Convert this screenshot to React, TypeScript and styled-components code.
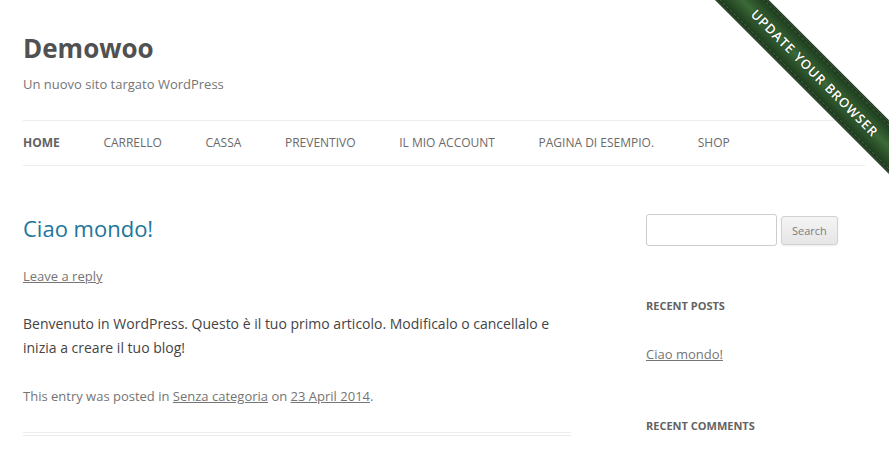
import React from "react";
import styled, { createGlobalStyle } from "styled-components";

const GlobalStyle = createGlobalStyle`
  html, body { margin: 0; padding: 0; background: #fff; }
  body {
    font-family: "Open Sans", "Liberation Sans", sans-serif;
    color: #444;
    font-size: 14px;
  }
  * { box-sizing: border-box; }
`;

const Page = styled.div`
  position: relative;
  overflow: hidden;
  height: 458px;
  padding: 0 24px 0 23px;
`;

const Header = styled.header`
  padding: 24px 0;
`;

const SiteTitle = styled.h1`
  margin: 0;
  font-size: 26px;
  line-height: 48px;
  font-weight: 700;
  color: #515151;
`;

const Tagline = styled.h2`
  margin: 0;
  font-size: 13px;
  line-height: 24px;
  font-weight: 400;
  color: #757575;
`;

const Nav = styled.nav`
  margin-top: 24px;
`;

const NavList = styled.ul`
  list-style: none;
  margin: 0;
  padding: 0;
  display: flex;
  gap: 43.6px;
  border-top: 1px solid #ededed;
  border-bottom: 1px solid #ededed;
`;

const NavItem = styled.li<{ $current?: boolean }>`
  font-size: 12px;
  line-height: 44.3px;
  text-transform: uppercase;
  white-space: nowrap;
  color: ${(p) => (p.$current ? "#636363" : "#6a6a6a")};
  font-weight: ${(p) => (p.$current ? 700 : 400)};
`;

const Main = styled.div`
  display: flex;
  justify-content: space-between;
  align-items: flex-start;
`;

const Content = styled.main`
  width: 548px;
  margin-top: 26px;
`;

const Article = styled.article`
  padding-bottom: 24px;
  border-bottom: 4px double #ededed;
`;

const EntryTitle = styled.h1`
  margin: 0;
  font-size: 22px;
  line-height: 24px;
  font-weight: 400;
  color: #21759b;
`;

const MetaLine = styled.div<{ $top?: number }>`
  margin-top: ${(p) => p.$top ?? 0}px;
  font-size: 13px;
  line-height: 24px;
  color: #757575;
`;

const GreyLink = styled.a`
  color: #757575;
  text-decoration: underline;
`;

const Paragraph = styled.p`
  margin: 24px 0;
  font-size: 14px;
  line-height: 24px;
  color: #444;
`;

const Sidebar = styled.aside`
  width: 219px;
  margin-top: 24px;
`;

const SearchForm = styled.form`
  display: flex;
  align-items: center;
  gap: 4px;
  margin-bottom: 48px;
`;

const SearchInput = styled.input`
  width: 131px;
  height: 32px;
  padding: 6px;
  border: 1px solid #ccc;
  border-radius: 3px;
  font-family: inherit;
  font-size: 13px;
`;

const SearchButton = styled.button`
  height: 29px;
  padding: 0 10px;
  font-family: inherit;
  font-size: 11px;
  color: #7c7c7c;
  background: linear-gradient(to bottom, #f4f4f4, #e6e6e6);
  border: 1px solid #d2d2d2;
  border-radius: 3px;
  box-shadow: 0 1px 2px rgba(64, 64, 64, 0.1);
`;

const Widget = styled.section`
  margin-bottom: 48px;
`;

const WidgetTitle = styled.h3`
  margin: 0 0 24px;
  font-size: 11px;
  line-height: 24px;
  font-weight: 700;
  text-transform: uppercase;
  color: #636363;
`;

const WidgetList = styled.ul`
  list-style: none;
  margin: 0;
  padding: 0;
  font-size: 13px;
  line-height: 24px;
`;

const Ribbon = styled.div`
  position: absolute;
  left: 655px;
  top: 53.5px;
  width: 320px;
  height: 37.5px;
  transform: rotate(45deg);
  background: linear-gradient(
    to bottom,
    #1a361a 0%,
    #2a4f29 25%,
    #3b6a38 50%,
    #2a4f29 75%,
    #1a361a 100%
  );
  border-top: 1px solid #142b14;
  border-bottom: 1px solid #142b14;
  display: flex;
  align-items: center;
  justify-content: center;
  color: #fff;
  font-size: 13px;
  font-weight: 600;
  letter-spacing: 0.95px;
  text-transform: uppercase;
  text-shadow: 0 0 2px rgba(0, 0, 0, 0.6);
  white-space: nowrap;

  &::before {
    content: "";
    position: absolute;
    left: 0;
    right: 0;
    top: 2px;
    bottom: 2px;
    border-top: 1px dashed rgba(255, 255, 255, 0.15);
    border-bottom: 1px dashed rgba(255, 255, 255, 0.15);
  }
`;

const navItems = [
  "Home",
  "Carrello",
  "Cassa",
  "Preventivo",
  "Il mio account",
  "Pagina di esempio.",
  "Shop",
];

export default function App() {
  return (
    <>
      <GlobalStyle />
      <Page>
        <Header>
          <SiteTitle>Demowoo</SiteTitle>
          <Tagline>Un nuovo sito targato WordPress</Tagline>
          <Nav>
            <NavList>
              {navItems.map((item, i) => (
                <NavItem key={item} $current={i === 0}>
                  {item}
                </NavItem>
              ))}
            </NavList>
          </Nav>
        </Header>
        <Main>
          <Content>
            <Article>
              <EntryTitle>Ciao mondo!</EntryTitle>
              <MetaLine $top={24}>
                <GreyLink>Leave a reply</GreyLink>
              </MetaLine>
              <Paragraph>
                Benvenuto in WordPress. Questo è il tuo primo articolo.
                Modificalo o cancellalo e inizia a creare il tuo blog!
              </Paragraph>
              <MetaLine>
                This entry was posted in <GreyLink>Senza categoria</GreyLink> on{" "}
                <GreyLink>23 April 2014</GreyLink>.
              </MetaLine>
            </Article>
          </Content>
          <Sidebar>
            <SearchForm onSubmit={(e) => e.preventDefault()}>
              <SearchInput type="text" />
              <SearchButton type="submit">Search</SearchButton>
            </SearchForm>
            <Widget>
              <WidgetTitle>Recent Posts</WidgetTitle>
              <WidgetList>
                <li>
                  <GreyLink>Ciao mondo!</GreyLink>
                </li>
              </WidgetList>
            </Widget>
            <Widget>
              <WidgetTitle>Recent Comments</WidgetTitle>
            </Widget>
          </Sidebar>
        </Main>
        <Ribbon>Update your browser</Ribbon>
      </Page>
    </>
  );
}
